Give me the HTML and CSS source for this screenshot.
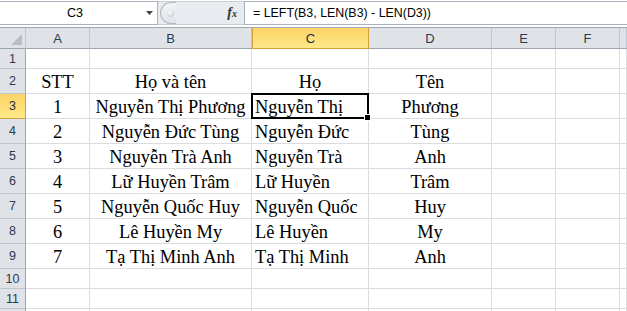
FILE: index.html
```html
<!DOCTYPE html>
<html lang="vi">
<head>
    <meta charset="UTF-8">
    <meta name="viewport" content="width=device-width, initial-scale=1.0">
    <title>Excel - LEFT</title>
    <link rel="stylesheet" href="styles.css">
</head>
<body>
    <div class="formula-bar">
        <div class="name-box">
            <span class="cell-ref">C3</span>
            <svg class="dropdown" width="7" height="4" viewBox="0 0 7 4"><path d="M0 0h7L3.5 4z" fill="#444"/></svg>
        </div>
        <div class="fx-area">
            <span class="sizer"><span class="sizer-dot"></span></span>
            <span class="fx"><i>f</i><i class="fx-x">x</i></span>
        </div>
        <div class="formula">= LEFT(B3, LEN(B3) - LEN(D3))</div>
    </div>
    <div class="bar-gap"></div>

    <div class="sheet">
        <!-- column headers -->
        <div class="row head-row">
            <div class="corner"><span class="corner-tri"></span></div>
            <div class="col-head">A</div>
            <div class="col-head">B</div>
            <div class="col-head active">C</div>
            <div class="col-head">D</div>
            <div class="col-head">E</div>
            <div class="col-head">F</div>
            <div class="col-head last"></div>
        </div>

        <div class="row short">
            <div class="row-head">1</div>
            <div class="cell"></div><div class="cell"></div><div class="cell"></div><div class="cell"></div><div class="cell"></div><div class="cell"></div><div class="cell"></div>
        </div>
        <div class="row">
            <div class="row-head">2</div>
            <div class="cell center">STT</div>
            <div class="cell center">Họ và tên</div>
            <div class="cell center">Họ</div>
            <div class="cell center">Tên</div>
            <div class="cell"></div><div class="cell"></div><div class="cell"></div>
        </div>
        <div class="row">
            <div class="row-head active">3</div>
            <div class="cell center">1</div>
            <div class="cell center">Nguyễn Thị Phương</div>
            <div class="cell selected">Nguyễn Thị<span class="fill-handle"></span></div>
            <div class="cell center">Phương</div>
            <div class="cell"></div><div class="cell"></div><div class="cell"></div>
        </div>
        <div class="row">
            <div class="row-head">4</div>
            <div class="cell center">2</div>
            <div class="cell center">Nguyễn Đức Tùng</div>
            <div class="cell">Nguyễn Đức</div>
            <div class="cell center">Tùng</div>
            <div class="cell"></div><div class="cell"></div><div class="cell"></div>
        </div>
        <div class="row">
            <div class="row-head">5</div>
            <div class="cell center">3</div>
            <div class="cell center">Nguyễn Trà Anh</div>
            <div class="cell">Nguyễn Trà</div>
            <div class="cell center">Anh</div>
            <div class="cell"></div><div class="cell"></div><div class="cell"></div>
        </div>
        <div class="row">
            <div class="row-head">6</div>
            <div class="cell center">4</div>
            <div class="cell center">Lữ Huyền Trâm</div>
            <div class="cell">Lữ Huyền</div>
            <div class="cell center">Trâm</div>
            <div class="cell"></div><div class="cell"></div><div class="cell"></div>
        </div>
        <div class="row">
            <div class="row-head">7</div>
            <div class="cell center">5</div>
            <div class="cell center">Nguyễn Quốc Huy</div>
            <div class="cell">Nguyễn Quốc</div>
            <div class="cell center">Huy</div>
            <div class="cell"></div><div class="cell"></div><div class="cell"></div>
        </div>
        <div class="row">
            <div class="row-head">8</div>
            <div class="cell center">6</div>
            <div class="cell center">Lê Huyền My</div>
            <div class="cell">Lê Huyền</div>
            <div class="cell center">My</div>
            <div class="cell"></div><div class="cell"></div><div class="cell"></div>
        </div>
        <div class="row">
            <div class="row-head">9</div>
            <div class="cell center">7</div>
            <div class="cell center">Tạ Thị Minh Anh</div>
            <div class="cell">Tạ Thị Minh</div>
            <div class="cell center">Anh</div>
            <div class="cell"></div><div class="cell"></div><div class="cell"></div>
        </div>
        <div class="row short">
            <div class="row-head">10</div>
            <div class="cell"></div><div class="cell"></div><div class="cell"></div><div class="cell"></div><div class="cell"></div><div class="cell"></div><div class="cell"></div>
        </div>
        <div class="row short">
            <div class="row-head">11</div>
            <div class="cell"></div><div class="cell"></div><div class="cell"></div><div class="cell"></div><div class="cell"></div><div class="cell"></div><div class="cell"></div>
        </div>
        <div class="row short">
            <div class="row-head"></div>
            <div class="cell"></div><div class="cell"></div><div class="cell"></div><div class="cell"></div><div class="cell"></div><div class="cell"></div><div class="cell"></div>
        </div>
    </div>
</body>
</html>
```

FILE: styles.css
```css
body {
    margin: 0;
    padding: 0;
    width: 627px;
    height: 311px;
    overflow: hidden;
    background: #ffffff;
    font-family: "Liberation Sans", Arial, sans-serif;
}

/* formula bar */
.formula-bar {
    display: flex;
    height: 25px;
    padding-top: 1px;
    box-sizing: border-box;
    background: #ffffff;
}

.name-box {
    width: 158px;
    display: flex;
    align-items: center;
    box-sizing: border-box;
    border: 1px solid #a9b2bd;
    border-left: none;
    background: #ffffff;
}

.cell-ref {
    flex: 1;
    text-align: center;
    font-size: 12.5px;
    color: #000;
    padding-left: 4px;
}

.dropdown {
    margin-right: 4px;
}

.fx-area {
    width: 86px;
    display: flex;
    align-items: center;
    justify-content: space-between;
    background: #e8ebef;
    border-top: 1px solid #c9ced5;
    border-bottom: 1px solid #c9ced5;
    box-sizing: border-box;
}

.sizer {
    width: 15px;
    height: 20px;
    margin-left: 2px;
    border: 1px solid #b3b9c1;
    border-right: none;
    border-radius: 12px 0 0 12px;
    background: linear-gradient(#f4f5f7, #dfe2e6);
    display: flex;
    align-items: center;
    justify-content: center;
}

.sizer-dot {
    width: 7px;
    height: 7px;
    border-radius: 50%;
    background: radial-gradient(circle at 40% 35%, #ffffff, #b9bec5);
    margin-left: 3px;
}

.fx {
    font-family: "Liberation Serif", serif;
    font-size: 14px;
    font-weight: bold;
    color: #333;
    margin-right: 7px;
}

.fx-x {
    font-size: 10px;
}

.formula {
    flex: 1;
    display: flex;
    align-items: center;
    padding-left: 8px;
    border: 1px solid #a9b2bd;
    border-right: none;
    font-size: 12.4px;
    color: #000;
}

.bar-gap {
    height: 2px;
    border-bottom: 1px solid #9ea6b0;
    background: #ffffff;
}

/* sheet grid */
.row {
    display: grid;
    grid-template-columns: 26px 64px 162px 117px 123px 64px 64px 1fr;
    height: 25px;
}

.row.short {
    height: 20px;
}

.row.head-row {
    height: 21px;
}

.corner,
.col-head,
.row-head {
    background: #dfe3e8;
    color: #2b3a4d;
    font-size: 13px;
    display: flex;
    align-items: center;
    justify-content: center;
    box-sizing: border-box;
}

.corner {
    border-right: 1px solid #c0c6cd;
    border-bottom: 1px solid #9ea6b0;
    position: relative;
}

.corner-tri {
    position: absolute;
    right: 3px;
    bottom: 3px;
    width: 0;
    height: 0;
    border-left: 11px solid transparent;
    border-bottom: 11px solid #b8bec5;
}

.col-head {
    border-right: 1px solid #c0c6cd;
    border-bottom: 1px solid #9ea6b0;
}

.row-head {
    border-right: 1px solid #9ea6b0;
    border-bottom: 1px solid #c0c6cd;
    font-size: 12.5px;
}

.col-head.active,
.row-head.active {
    background: linear-gradient(#fad466, #ffe88a);
    border-color: #d59e3a;
    color: #1f2b3a;
}

.col-head.active {
    border-left: 1px solid #d59e3a;
}

.cell {
    box-sizing: border-box;
    border-right: 1px solid #dadcdd;
    border-bottom: 1px solid #dadcdd;
    font-family: "Liberation Serif", "Times New Roman", serif;
    font-size: 18.4px;
    line-height: 18px;
    color: #000;
    display: flex;
    align-items: flex-end;
    padding: 0 0 2px 3px;
    white-space: nowrap;
}

.cell.center {
    justify-content: center;
    padding-left: 0;
}

.cell.selected {
    position: relative;
    border: 2px solid #000;
    margin: -1px 0 0 -1px;
    padding-left: 2px;
    padding-bottom: 1px;
    height: 26px;
}

.fill-handle {
    position: absolute;
    right: -4px;
    bottom: -4px;
    width: 5px;
    height: 5px;
    background: #000;
    border: 1px solid #fff;
}
```
